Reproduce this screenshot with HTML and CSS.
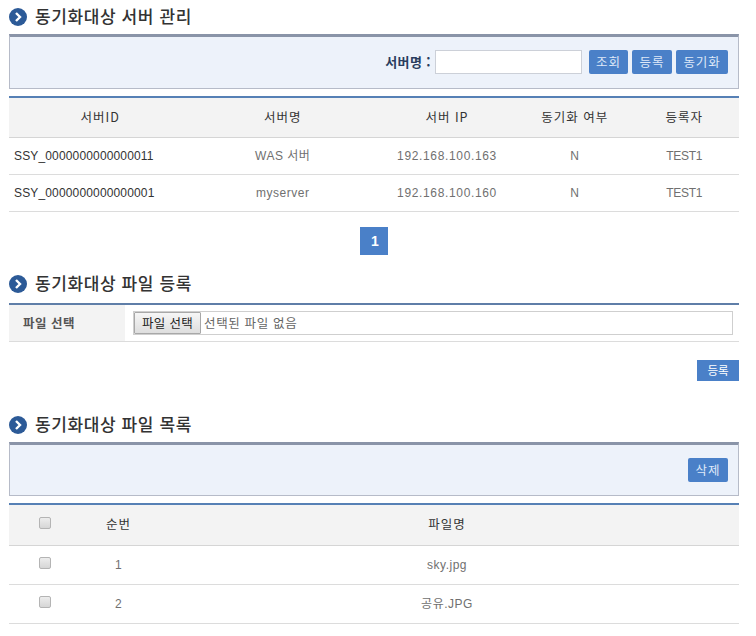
FILE: index.html
```html
<!DOCTYPE html>
<html lang="ko">
<head>
<meta charset="utf-8">
<title>동기화대상 서버 관리</title>
<link rel="stylesheet" href="styles.css">
</head>
<body>
<main class="page">
  <h2 class="title"><svg class="bullet" viewBox="0 0 18 18"><circle cx="9" cy="9" r="9" fill="#2c5a97"/><path d="M7 5l4 4-4 4" fill="none" stroke="#fff" stroke-width="2.4"/></svg><span class="title-text">동기화대상 서버 관리</span></h2>
  <div class="toolbar">
    <label class="search-label" for="srv">서버명 :</label>
    <input class="search-input" id="srv" type="text">
    <button class="btn btn-query">조회</button>
    <button class="btn btn-reg">등록</button>
    <button class="btn btn-sync">동기화</button>
  </div>
  <table class="grid grid-server">
    <colgroup><col class="c25"><col class="c25"><col class="c20"><col class="c15"><col class="c15"></colgroup>
    <thead><tr><th>서버ID</th><th>서버명</th><th>서버 IP</th><th>동기화 여부</th><th>등록자</th></tr></thead>
    <tbody>
      <tr><td class="left dark id">SSY_0000000000000011</td><td>WAS 서버</td><td class="ip">192.168.100.163</td><td>N</td><td class="author">TEST1</td></tr>
      <tr><td class="left dark id">SSY_0000000000000001</td><td>myserver</td><td class="ip">192.168.100.160</td><td>N</td><td class="author">TEST1</td></tr>
    </tbody>
  </table>
  <nav class="pager"><a class="page-num">1</a></nav>

  <h2 class="title title-file"><svg class="bullet" viewBox="0 0 18 18"><circle cx="9" cy="9" r="9" fill="#2c5a97"/><path d="M7 5l4 4-4 4" fill="none" stroke="#fff" stroke-width="2.4"/></svg><span class="title-text">동기화대상 파일 등록</span></h2>
  <div class="form-row">
    <div class="form-label">파일 선택</div>
    <div class="form-field">
      <div class="file-box"><button class="file-btn">파일 선택</button><span class="file-text">선택된 파일 없음</span></div>
    </div>
  </div>
  <div class="actions"><button class="btn-square">등록</button></div>

  <h2 class="title"><svg class="bullet" viewBox="0 0 18 18"><circle cx="9" cy="9" r="9" fill="#2c5a97"/><path d="M7 5l4 4-4 4" fill="none" stroke="#fff" stroke-width="2.4"/></svg><span class="title-text">동기화대상 파일 목록</span></h2>
  <div class="toolbar toolbar-list">
    <button class="btn btn-del">삭제</button>
  </div>
  <table class="grid grid-files">
    <colgroup><col class="c10"><col class="c10"><col></colgroup>
    <thead><tr><th class="check-cell"><input class="check" type="checkbox"></th><th>순번</th><th>파일명</th></tr></thead>
    <tbody>
      <tr><td><input class="check" type="checkbox"></td><td>1</td><td>sky.jpg</td></tr>
      <tr><td><input class="check" type="checkbox"></td><td>2</td><td>공유.JPG</td></tr>
    </tbody>
  </table>
</main>
</body>
</html>
```

FILE: styles.css
```css
* { box-sizing: border-box; }
html, body { margin: 0; padding: 0; background: #fff; }
body { font-family: "Liberation Sans", "Noto Sans CJK KR", sans-serif; font-size: 12px; color: #666; }
.page { width: 730px; margin-left: 9px; }

.title { display: flex; align-items: center; gap: 8px; height: 34px; margin: 0; font: 500 17px/32px "Noto Sans CJK KR", sans-serif; color: #333; letter-spacing: .6px; }
.title-text { margin-top: -2px; }
.title-file { height: 36px; padding-bottom: 2px; margin-top: 12px; }
.bullet { width: 18px; height: 18px; flex: none; }

.toolbar { display: flex; justify-content: flex-end; align-items: flex-start; height: 55px; padding: 13px 10px 0 0; background: #edf2fa; border: 1px solid #b6bbc8; border-top: 3px solid #8a94a8; }
.toolbar-list { height: 54px; }
.search-label { font: 700 13px/23px "Noto Sans CJK KR", sans-serif; color: #2a3d5e; margin-right: 4px; letter-spacing: .4px; }
.search-input { width: 147px; height: 24px; margin: 0 7px 0 0; border: 1px solid #ccd0d8; background: #fff; }
.btn { height: 24px; padding: 0; border: 0; border-radius: 2px; background: #4a80c8; color: #dfe9f8; font: 400 12.5px/24px "Noto Sans CJK KR", sans-serif; letter-spacing: .9px; }
.btn-query { width: 39px; }
.btn-reg { width: 40px; margin-left: 4px; }
.btn-sync { width: 52px; margin-left: 4px; }
.btn-del { width: 40px; }

.grid { width: 730px; table-layout: fixed; border-collapse: separate; border-spacing: 0; margin-top: 7px; border-top: 2px solid #5680b5; }
.c25 { width: 25%; }
.c20 { width: 20%; }
.c15 { width: 15%; }
.c10 { width: 10%; }
.grid th, .grid td { padding: 0; text-align: center; vertical-align: middle; border-bottom: 1px solid #dcdcdc; }
.grid th { height: 40px; padding-bottom: 2px; background: #f3f3f3; border-bottom-color: #d5d5d5; font: 400 12.5px/16px "Noto Sans CJK KR", sans-serif; letter-spacing: 1px; color: #333; }
.grid td { height: 37px; color: #707070; letter-spacing: .5px; line-height: 16px; }
.grid td.left { text-align: left; padding-left: 5px; }
.grid td.dark { color: #333; }
.grid td.id { letter-spacing: .15px; }
.grid td.ip { letter-spacing: .65px; }
.grid td.author { letter-spacing: -.3px; }

.pager { display: flex; justify-content: center; margin-top: 15px; }
.page-num { width: 28px; height: 28px; padding-left: 2px; background: #4a80c8; color: #fff; font: 700 14px/28px "Liberation Sans", sans-serif; text-align: center; }

.form-row { display: flex; height: 39px; border-top: 2px solid #5f7ea8; border-bottom: 1px solid #dcdcdc; }
.form-label { width: 116px; background: #f3f3f3; padding-left: 14px; font: 700 12.5px/35px "Noto Sans CJK KR", sans-serif; color: #555; letter-spacing: .5px; }
.form-field { flex: 1; padding: 6px 6px 0 8px; }
.file-box { display: flex; align-items: center; height: 24px; border: 1px solid #cfcfcf; }
.file-btn { width: 67px; height: 22px; padding: 0; border: 1px solid #a8a8a8; border-radius: 1px; background: linear-gradient(#f6f6f6, #dedede); color: #222; font: 400 12.5px/20px "Noto Sans CJK KR", sans-serif; letter-spacing: .3px; }
.file-text { margin-left: 3px; color: #666; font: 400 12.5px/16px "Noto Sans CJK KR", sans-serif; letter-spacing: .65px; }

.actions { display: flex; justify-content: flex-end; height: 66px; padding-top: 18px; }
.btn-square { width: 42px; height: 21px; padding: 0; border: 0; background: #4a80c8; color: #fff; font: 400 11.5px/21px "Noto Sans CJK KR", sans-serif; }

.grid-files th { height: 41px; padding-bottom: 3px; }
.grid-files th.check-cell { padding-bottom: 0; }
.grid-files td { height: 39px; }
.check { appearance: none; display: block; width: 12px; height: 12px; margin: -5px 0 0 30px; border: 1px solid #b4b4b4; border-radius: 2px; background: linear-gradient(#ededed, #d6d6d6); }
.check-cell .check { margin-top: -4px; }
```
